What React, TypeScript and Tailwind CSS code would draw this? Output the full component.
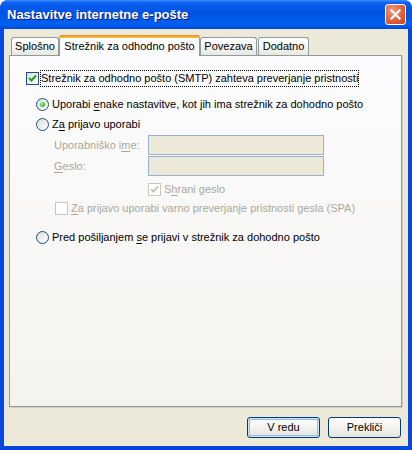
import React from "react";

const font = { fontFamily: '"Liberation Sans", Arial, sans-serif' };

function Check({ checked, disabled }: { checked?: boolean; disabled?: boolean }) {
  return (
    <div
      className={
        "w-[13px] h-[13px] shrink-0 border flex items-center justify-center " +
        (disabled
          ? "border-[#CAC8BB] bg-white"
          : "border-[#1C5180] bg-[linear-gradient(135deg,#DCDCD7_0%,#FFFFFF_100%)]")
      }
    >
      {checked && (
        <svg width="9" height="9" viewBox="0 0 9 9">
          <path
            d="M1 4 L3.5 6.5 L8 1.5"
            fill="none"
            stroke={disabled ? "#CAC8BB" : "#21A121"}
            strokeWidth="2"
          />
        </svg>
      )}
    </div>
  );
}

function Radio({ checked }: { checked?: boolean }) {
  return (
    <div className="w-[13px] h-[13px] shrink-0 rounded-full border border-[#1C5180] bg-[linear-gradient(135deg,#DCDCD7_0%,#FFFFFF_100%)] flex items-center justify-center">
      {checked && (
        <div className="w-[5px] h-[5px] rounded-full bg-[radial-gradient(circle_at_35%_35%,#A6EE9A_0%,#4DCB3D_50%,#21A121_100%)]" />
      )}
    </div>
  );
}

function U({ children }: { children: React.ReactNode }) {
  return <span className="underline underline-offset-[2px]">{children}</span>;
}

export default function App() {
  return (
    <div
      className="w-[412px] h-[450px] flex flex-col rounded-t-[8px] bg-[#0847D9] overflow-hidden text-[11px] text-black"
      style={font}
    >
      {/* Title bar */}
      <div className="h-[29px] shrink-0 flex items-center justify-between pl-[7px] pr-[6px] rounded-t-[8px] bg-[linear-gradient(to_bottom,#3A8CFF_0%,#0A5EF0_10%,#0054E3_45%,#0160F0_85%,#0048DA_100%)]">
        <span className="text-white font-bold text-[13px] [text-shadow:1px_1px_0_#0A1883]">
          Nastavitve internetne e-pošte
        </span>
        <div className="w-[21px] h-[21px] rounded-[3px] border border-white bg-[radial-gradient(circle_at_35%_30%,#F19A80_0%,#E2613E_55%,#C8401C_100%)] flex items-center justify-center">
          <svg width="11" height="11" viewBox="0 0 11 11">
            <path d="M1.5 1.5 L9.5 9.5 M9.5 1.5 L1.5 9.5" stroke="white" strokeWidth="2.2" strokeLinecap="square" />
          </svg>
        </div>
      </div>

      {/* Client */}
      <div className="flex-1 mx-[4px] mb-[4px] bg-[#ECE9D8] flex flex-col">
        {/* Tabs */}
        <div className="h-[27px] shrink-0 flex items-end pl-[7px] relative z-10">
          <div className="w-[48px] h-[18px] border border-b-0 border-[#919B9C] rounded-t-[3px] bg-[linear-gradient(to_bottom,#FFFFFF_0%,#F3F3EF_60%,#E8E6DF_100%)] flex items-center justify-center mb-[1px]">
            Splošno
          </div>
          <div className="w-[141px] h-[21px] border border-b-0 border-[#919B9C] rounded-t-[3px] bg-[#FCFCFE] flex flex-col">
            <div className="h-[3px] -mx-px -mt-px rounded-t-[3px] bg-[linear-gradient(to_bottom,#E68B2C_0%,#FFC73C_100%)]" />
            <div className="flex-1 flex items-center justify-center pb-[1px]">Strežnik za odhodno pošto</div>
          </div>
          <div className="w-[57px] h-[18px] border border-b-0 border-[#919B9C] rounded-t-[3px] bg-[linear-gradient(to_bottom,#FFFFFF_0%,#F3F3EF_60%,#E8E6DF_100%)] flex items-center justify-center mb-[1px]">
            Povezava
          </div>
          <div className="w-[51px] h-[18px] ml-[1px] border border-b-0 border-[#919B9C] rounded-t-[3px] bg-[linear-gradient(to_bottom,#FFFFFF_0%,#F3F3EF_60%,#E8E6DF_100%)] flex items-center justify-center mb-[1px]">
            Dodatno
          </div>
        </div>

        {/* Panel */}
        <div className="ml-[5px] mr-[6px] h-[352px] -mt-[1px] border border-[#919B9C] shadow-[1px_1px_0_#D0CEBF] bg-[linear-gradient(to_bottom,#FCFCFE_0%,#F4F3EE_100%)] flex flex-col">
          <div className="mt-[14px] ml-[16px] h-[17px] flex items-center">
            <Check checked />
            <span className="ml-[1px] px-[1px] h-[17px] flex items-center outline outline-1 outline-dotted outline-black -outline-offset-1">
              Strežnik za odhodno pošto (SMTP) zahteva preverjanje pristnosti
            </span>
          </div>

          <div className="mt-[11px] ml-[26px] h-[13px] flex items-center">
            <Radio checked />
            <span className="ml-[3px]">
              Uporabi <U>e</U>nake nastavitve, kot jih ima strežnik za dohodno pošto
            </span>
          </div>

          <div className="mt-[7px] ml-[26px] h-[13px] flex items-center">
            <Radio />
            <span className="ml-[3px]">
              Z<U>a</U> prijavo uporabi
            </span>
          </div>

          <div className="mt-[4px] ml-[44px] h-[20px] flex items-center text-[#ACA899]">
            <span className="w-[94px]">
              Uporabniško i<U>m</U>e:
            </span>
            <div className="w-[176px] h-[20px] border border-[#9AB0CF] bg-[#ECE9D8]" />
          </div>
          <div className="mt-[1px] ml-[44px] h-[20px] flex items-center text-[#ACA899]">
            <span className="w-[94px]">
              <U>G</U>eslo:
            </span>
            <div className="w-[176px] h-[20px] border border-[#9AB0CF] bg-[#ECE9D8]" />
          </div>

          <div className="mt-[7px] ml-[138px] h-[13px] flex items-center text-[#ACA899]">
            <Check checked disabled />
            <span className="ml-[3px]">
              S<U>h</U>rani geslo
            </span>
          </div>

          <div className="mt-[6px] ml-[45px] h-[13px] flex items-center text-[#ACA899]">
            <Check disabled />
            <span className="ml-[3px]">
              <U>Z</U>a prijavo uporabi varno preverjanje pristnosti gesla (SPA)
            </span>
          </div>

          <div className="mt-[16px] ml-[26px] h-[13px] flex items-center">
            <Radio />
            <span className="ml-[3px]">
              Pred pošiljanjem <U>s</U>e prijavi v strežnik za dohodno pošto
            </span>
          </div>
        </div>

        {/* Buttons */}
        <div className="mt-[10px] mr-[7px] flex justify-end gap-[8px]">
          <div className="w-[73px] h-[21px] rounded-[3px] border border-[#003C74] bg-[linear-gradient(to_bottom,#FFFFFF_0%,#F0F0EA_60%,#E3E2DA_100%)] shadow-[inset_0_0_0_1px_#CEE7FF,inset_0_0_0_2px_#98B8EA] flex items-center justify-center">
            V redu
          </div>
          <div className="w-[73px] h-[21px] rounded-[3px] border border-[#003C74] bg-[linear-gradient(to_bottom,#FFFFFF_0%,#F0F0EA_60%,#E3E2DA_100%)] flex items-center justify-center">
            Prekliči
          </div>
        </div>
      </div>
    </div>
  );
}
